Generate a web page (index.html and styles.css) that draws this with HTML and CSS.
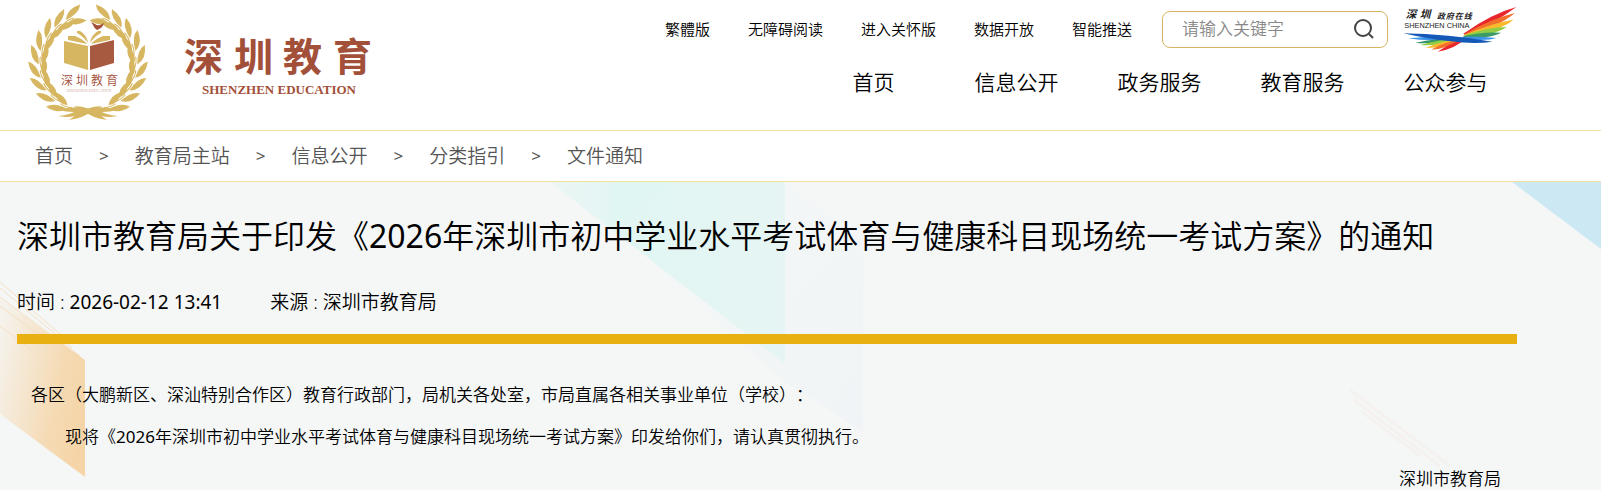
FILE: index.html
```html
<!DOCTYPE html>
<html lang="zh-CN">

	<head>
		<meta charset="UTF-8">
		<title>深圳市教育局</title>
		<link rel="stylesheet" href="styles.css">
	</head>

	<body>
		<div class="header">
			<a class="logo" href="#">
				<svg class="logo_svg" viewBox="0 0 400 130" role="img" aria-label="深圳教育">
					<defs>
						<g id="leaf">
							<path d="M84 15Q89 5 103 6Q99 14 84 15z" />
							<path d="M85 18Q95 14 103 23Q92 26 85 18z" />
							<path d="M80 18Q87 15 92 16" fill="none" stroke="#d6b660" stroke-width="1" />
						</g>
						<g id="branch">
							<use href="#leaf" transform="rotate(-22 88 64)" />
							<use href="#leaf" transform="rotate(-38 88 64)" />
							<use href="#leaf" transform="rotate(-54 88 64)" />
							<use href="#leaf" transform="rotate(-70 88 64)" />
							<use href="#leaf" transform="rotate(-86 88 64)" />
							<use href="#leaf" transform="rotate(-102 88 64)" />
							<use href="#leaf" transform="rotate(-118 88 64)" />
							<use href="#leaf" transform="rotate(-134 88 64)" />
							<use href="#leaf" transform="rotate(-150 88 64)" />
							<path d="M58 110Q72 106 86 108Q78 120 58 116Q68 115 74 112Q66 112 58 110z" />
							<path d="M74 106Q90 106 104 118L107 120Q92 118 84 111z" />
						</g>
					</defs>
					<g fill="#d6b660">
						<use href="#branch" />
						<use href="#branch" transform="translate(176 0) scale(-1 1)" />
						<path d="M64 41L88 46V70L64 63z" />
						<path d="M68 36L75 36Q83 39 87 44L68 40z" />
						<path d="M77 31L80 31Q87 35 88 43Q83 36 77 33z" />
						<path d="M110 36L103 36Q95 39 91 44L110 40z" />
						<path d="M101 31L98 31Q91 35 90 43Q95 36 101 33z" />
					</g>
					<path fill="#a75a3f" d="M90 46L114 40V63L90 70z" />
					<path fill="#a3503a" d="M91 22L95 24Q97 26 100 25L104 23Q103 28 97 30Q94 28 93 25z" />
					<g fill="#a3503a">
						<text class="logo_small" y="85" x="61 76 91 106">深圳教育</text>
						<text class="logo_tiny" x="89" y="92" text-anchor="middle">SHENZHEN EDUCATION</text>
						<text class="logo_name" y="71" x="184 234 283 333">深圳教育</text>
						<text class="logo_en" x="279" y="94" text-anchor="middle">SHENZHEN EDUCATION</text>
					</g>
				</svg>
			</a>
			<div class="right">
				<div class="top">
					<div class="links">
						<a href="#">繁體版</a>
						<a href="#">无障碍阅读</a>
						<a href="#">进入关怀版</a>
						<a href="#">数据开放</a>
						<a href="#">智能推送</a>
					</div>
					<form class="search">
						<input type="text" placeholder="请输入关键字" aria-label="请输入关键字">
						<button type="button" aria-label="搜索">
							<svg viewBox="0 0 22 22" fill="none" stroke="#444" stroke-width="2">
								<circle cx="10" cy="10" r="8" />
								<path d="M16 16L20 20" />
							</svg>
						</button>
					</form>
					<a class="gov" href="#">
						<svg viewBox="0 0 366 180" role="img" aria-label="深圳政府在线">
							<path fill="#e8262b" d="M364 24Q290 44 205 104L212 108Q300 72 364 24z" />
							<path fill="#f0702c" d="M360 42Q290 58 208 106L212 110Q310 84 360 42z" />
							<path fill="#fbb92d" d="M356 62Q290 72 208 108L214 111Q310 98 356 62z" />
							<path fill="#8fce45" d="M335 84Q280 84 204 110L212 115Q300 108 335 84z" />
							<path fill="#3b9b67" d="M318 101Q260 98 204 112L212 117Q290 118 318 101z" />
							<path fill="#3c94ea" d="M304 117Q250 112 200 114L214 121Q280 126 304 117z" />
							<path fill="#3c94ea" d="M40 118Q110 110 204 116Q110 130 40 118z" />
							<path fill="#35936b" d="M62 131Q120 118 204 116Q110 138 62 131z" />
							<path fill="#8fce45" d="M76 138Q130 122 204 117Q120 144 76 138z" />
							<path fill="#fbb92d" d="M92 147Q140 126 208 117Q140 148 92 147z" />
							<path fill="#f0702c" d="M108 152Q150 128 212 117Q150 152 108 152z" />
							<path fill="#e8262b" d="M128 158Q160 136 214 117Q180 150 128 158z" />
							<path fill="#1459b8" d="M25 103Q90 104 160 110T292 128Q240 136 165 127T25 103z" />
							<g fill="#222">
								<text class="gov_name" x="32 74" y="57">深圳</text>
								<text class="gov_sub" x="126 152 179 206" y="60">政府在线</text>
								<text class="gov_en" x="28" y="88">SHENZHEN CHINA</text>
							</g>
						</svg>
					</a>
				</div>
				<div class="nav">
					<a href="#">首页</a>
					<a href="#">信息公开</a>
					<a href="#">政务服务</a>
					<a href="#">教育服务</a>
					<a href="#">公众参与</a>
				</div>
			</div>
		</div>

		<div class="crumb">
			<a href="#">首页</a>
			<span>&gt;</span>
			<a href="#">教育局主站</a>
			<span>&gt;</span>
			<a href="#">信息公开</a>
			<span>&gt;</span>
			<a href="#">分类指引</a>
			<span>&gt;</span>
			<a href="#">文件通知</a>
		</div>

		<div class="main">
			<svg class="bg" viewBox="0 0 1601 318" preserveAspectRatio="xMinYMin slice" aria-hidden="true">
				<defs>
					<linearGradient id="orange" x1="0" y1="0.200" x2="1" y2="0.600">
						<stop offset="0" stop-color="#f5d5a8" stop-opacity="0.150" />
						<stop offset="0.700" stop-color="#f5d5a8" stop-opacity="0.850" />
						<stop offset="1" stop-color="#f5d5a8" />
					</linearGradient>
					<linearGradient id="mint" x1="0" y1="0" x2="1" y2="0">
						<stop offset="0" stop-color="#ebf5f4" />
						<stop offset="0.350" stop-color="#e1f6f3" />
						<stop offset="1" stop-color="#e6f5f3" />
					</linearGradient>
					<linearGradient id="pale" x1="0" y1="0" x2="1" y2="1">
						<stop offset="0" stop-color="#f1f5f6" stop-opacity="0" />
						<stop offset="1" stop-color="#f0f4f6" />
					</linearGradient>
				</defs>
				<!-- 左侧橙色 -->
				<path fill="url(#orange)" d="M0 116L85 178V295L0 232z" />
				<path stroke="#f4dfc2" fill="none" d="M0 100L62 154M0 106L72 166M0 115L80 174M0 124L60 168M0 144L50 182" />
				<!-- 中间绿色 -->
				<path fill="url(#pale)" d="M785 0L863 60V250L785 200L640 70z" />
				<path fill="url(#mint)" d="M550 0H785V182z" />
				<path fill="#def7f2" opacity="0.600" d="M612 0H670L612 46z" />
				<!-- 右侧蓝色 -->
				<path fill="#cbe8f3" d="M1512 0H1601V67z" />
				<path stroke="#f4f1ef" stroke-width="3" fill="none" d="M1350 208L1450 284M1354 218L1440 284M1362 230L1420 274" />
			</svg>
			<div class="article">
				<h1>深圳市教育局关于印发《<span class="num">2026</span>年深圳市初中学业水平考试体育与健康科目现场统一考试方案》的通知</h1>
				<div class="info">
					<div>时间 : <span class="num">2026-02-12 13:41</span></div>
					<div>来源 : 深圳市教育局</div>
				</div>
				<div class="text">
					<p>各区（大鹏新区、深汕特别合作区）教育行政部门，局机关各处室，市局直属各相关事业单位（学校）：</p>
					<p class="indent">现将《<span class="num">2026</span>年深圳市初中学业水平考试体育与健康科目现场统一考试方案》印发给你们，请认真贯彻执行。</p>
					<p class="sign">深圳市教育局</p>
				</div>
			</div>
		</div>
	</body>

</html>
```

FILE: styles.css
```css
* {
	margin: 0;
	padding: 0;
	box-sizing: border-box;
}

body {
	font-family: "Noto Sans", "Noto Sans CJK SC", sans-serif;
	font-weight: 350;
	color: #000;
	background-color: #fff;
	text-spacing-trim: space-all;
}

a {
	color: inherit;
	text-decoration: none;
}

.num {
	font-weight: 400;
}

/*头部*/
.header {
	display: flex;
	justify-content: space-between;
	height: 131px;
	padding-right: 84px;
	border-bottom: 1px solid #f5e0a0;
}

.logo_svg {
	display: block;
	width: 400px;
	height: 130px;
}

.logo_name {
	font-family: "Noto Sans CJK SC", sans-serif;
	font-size: 39px;
	font-weight: bold;
}

.logo_small {
	font-family: "Noto Sans CJK SC", sans-serif;
	font-size: 12px;
}

.logo_en {
	font-family: "Liberation Serif", serif;
	font-size: 13px;
	font-weight: bold;
}

.logo_tiny {
	font-family: "Liberation Serif", serif;
	font-size: 4px;
	opacity: 0.5;
}

.right {
	display: flex;
	flex-direction: column;
	align-items: flex-end;
}

.top {
	display: flex;
	align-items: center;
	height: 58px;
}

.links {
	display: flex;
	gap: 38px;
	margin-right: 30px;
	font-size: 15px;
	line-height: 20px;
}

.search {
	display: flex;
	align-items: center;
	width: 226px;
	height: 37px;
	margin-right: 7px;
	padding: 0 12px 0 19px;
	border: 1px solid #d6b660;
	border-radius: 8px;
}

.search input {
	flex: 1;
	min-width: 0;
	border: none;
	outline: none;
	background: none;
	font: inherit;
	font-size: 17px;
	line-height: 24px;
}

.search input::placeholder {
	color: #888;
}

.search button {
	width: 22px;
	height: 22px;
	border: none;
	background: none;
	cursor: pointer;
}

.search svg,
.gov svg {
	display: block;
	width: 100%;
}

.gov {
	width: 122px;
}

.gov_name,
.gov_sub {
	font-family: "Noto Sans CJK SC", sans-serif;
	font-size: 32px;
	font-weight: bold;
	font-style: italic;
}

.gov_sub {
	font-size: 24px;
}

.gov_en {
	font-family: "Liberation Sans", sans-serif;
	font-size: 22px;
}

.nav {
	display: grid;
	grid-template-columns: repeat(5, 143px);
	font-size: 21px;
	line-height: 48px;
	text-align: center;
}

/*面包屑*/
.crumb {
	display: flex;
	gap: 26px;
	padding-left: 35px;
	border-bottom: 1px solid #f5e0a0;
	color: #555;
	font-size: 19px;
	line-height: 50px;
}

.crumb span {
	font-size: 17px;
	font-weight: 400;
}

/*正文*/
.main {
	position: relative;
	overflow: hidden;
	background-color: #f5f7f7;
}

.bg {
	position: absolute;
	top: 0;
	left: 0;
	width: 100%;
	height: 100%;
}

.article {
	position: relative;
	padding: 30px 84px 0 17px;
}

.article h1 {
	font-size: 32px;
	font-weight: 350;
	line-height: 48px;
}

.info {
	display: flex;
	gap: 48px;
	padding: 28px 0 18px;
	border-bottom: 10px solid #e8b010;
	font-size: 19px;
	line-height: 28px;
}

.text {
	padding: 30px 16px 0 14px;
	font-size: 17px;
	line-height: 42px;
}

.indent {
	text-indent: 2em;
}

.sign {
	text-align: right;
}
```
